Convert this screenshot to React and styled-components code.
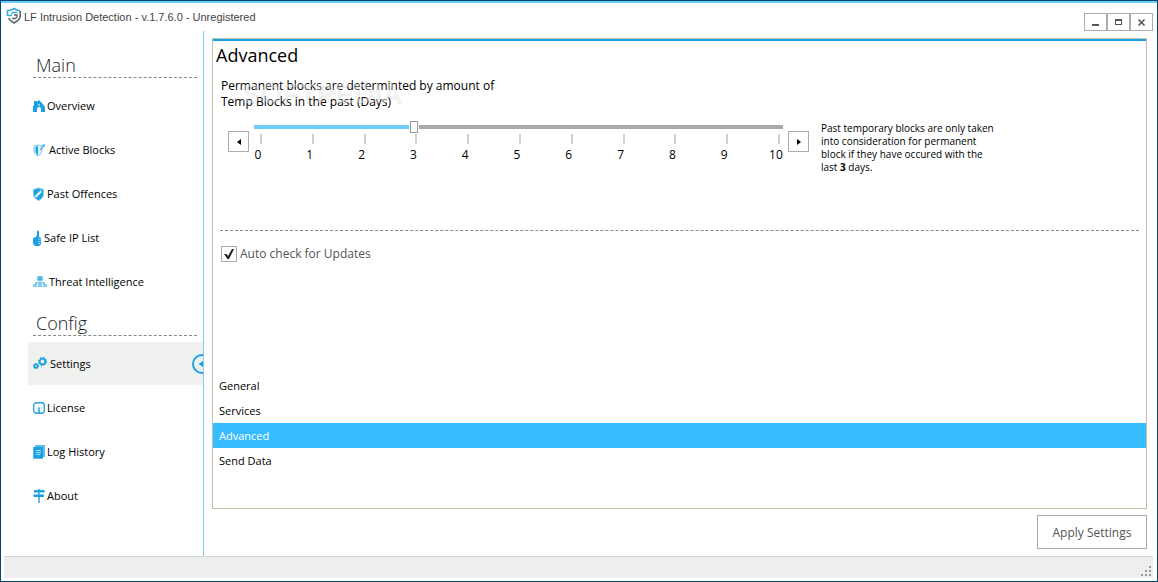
import React, { useState } from 'react'
import styled, { createGlobalStyle, css } from 'styled-components'

const mainLinks = [
    { name: 'Overview', icon: 'home', gap: 2 },
    { name: 'Active Blocks', icon: 'swordShield', gap: 3 },
    { name: 'Past Offences', icon: 'shield', gap: 3 },
    { name: 'Safe IP List', icon: 'thumb', gap: 2 },
    { name: 'Threat Intelligence', icon: 'network', gap: 2 },
]

const configLinks = [
    { name: 'Settings', icon: 'gears', gap: 3 },
    { name: 'License', icon: 'license', gap: 2 },
    { name: 'Log History', icon: 'log', gap: 2 },
    { name: 'About', icon: 'sign', gap: 2 },
]

const tabs = ['General', 'Services', 'Advanced', 'Send Data']

const icons = {
    home: (
        <svg width="12" height="14" viewBox="0 0 12 14" fill="#1ba1e2">
            <path d="M0 7 1 6V2h3v1l2-2 3 3 3 4v5H8v-3a2 2 0 0 0-4 0v3H0z" />
            <path d="M5 5h2v2H5z" fill="#8dd0f1" />
        </svg>
    ),
    swordShield: (
        <svg width="13" height="14" viewBox="0 0 13 14">
            <path d="M1 3 5 2 9 3v4c0 3-2 5-4 6-2-1-4-3-4-6z" fill="#e2f4fc" stroke="#78c9ef" />
            <path d="M2.500 4 5 3v9C3 11 2.500 9 2.500 7z" fill="#1ba1e2" />
            <path d="m7 7 5-5.500M9.500 1.500l2 2" stroke="#4bb6e8" strokeWidth="1.300" />
        </svg>
    ),
    shield: (
        <svg width="11" height="14" viewBox="0 0 11 14">
            <path d="M.5 2.500 5.500 1l5 1.500V7c0 3-2 5-5 6.500C2.500 12 .5 10 .5 7z" fill="#1ba1e2" stroke="#78c9ef" />
            <path d="m2 8.500 6.500-6v3L3 11z" fill="#e6f6fd" />
        </svg>
    ),
    thumb: (
        <svg width="9" height="16" viewBox="0 0 9 16" fill="#1ba1e2">
            <path d="M4 1c1-1 2-.5 2 1v5c2 0 2 1 2 2v4c0 2-1 3-3 3H3c-2 0-3-2-3-4V9c0-1 1-2 3-2l1-2z" />
            <path d="M5 9h3M5 11.500h3M5 13.500h2" stroke="#8dd0f1" />
        </svg>
    ),
    network: (
        <svg width="14" height="13" viewBox="0 0 14 13" fill="#9ad7f4" stroke="#78c9ef">
            <path d="M4.500 1.500h5v4h-5zM.5 9.500h3v2h-3zM5.500 9.500h3v2h-3zM10.500 9.500h3v2h-3zM7 5.500v4M2.500 9V7.500h9V9" />
            <path d="M5 2h4v3H5z" fill="#4bb6e8" stroke="none" />
        </svg>
    ),
    gears: (
        <svg width="14" height="13" viewBox="0 0 14 13" fill="none" stroke="#1ba1e2">
            <circle cx="9.500" cy="4.500" r="2.800" strokeWidth="1.800" />
            <circle cx="9.500" cy="4.500" r="4" strokeWidth="1.200" strokeDasharray="1.600 1.540" />
            <circle cx="3" cy="9" r="1.700" strokeWidth="1.700" />
            <circle cx="3" cy="9" r="2.600" strokeWidth="1" strokeDasharray="1.100 .94" />
            <path d="m8 10 1 1.500" stroke="#9ad7f4" />
        </svg>
    ),
    license: (
        <svg width="12" height="12" viewBox="0 0 12 12" fill="none" stroke="#1ba1e2">
            <rect x=".75" y=".75" width="10.500" height="10.500" rx="2.500" strokeWidth="1.300" />
            <path d="M4 8V6.500C4 5 5 4.500 6 4.500s2 .5 2 2V8" stroke="#bfe6f8" />
            <path d="M6 5.500V11" strokeWidth="1.500" />
        </svg>
    ),
    log: (
        <svg width="12" height="14" viewBox="0 0 12 14">
            <path d="M2 0h10v12h-2v2H0V2h2z" fill="#5dbdea" />
            <path d="M1 2h9v11H1z" fill="#1ba1e2" />
            <path d="M3 5.500h5M3 7.500h5M3 9.500h4" stroke="#a9def6" />
        </svg>
    ),
    sign: (
        <svg width="12" height="14" viewBox="0 0 12 14" fill="#1ba1e2">
            <path d="M5 0h2v14H5z" fill="#5dbdea" />
            <path d="M1 1h10l1 1.250L11 3.500H1zM1 5.500h10V8H1L0 6.750z" />
        </svg>
    ),
}

function Logo() {
    return (
        <svg width="16" height="17" viewBox="0 0 16 17" fill="none" aria-hidden="true">
            <path d="M1.500 9V3.500C4 3.500 6 3 8 1.500c2 1.500 4 2 6 2" stroke="#38a9df" strokeWidth="1.600" />
            <path d="M14.200 4v5c0 3-3 5.500-6.200 7-3-1.500-4.500-3-5.500-5" stroke="#5b6268" strokeWidth="1.600" />
            <path d="M2 8.500h4M11.500 5.500H7L5.500 7" stroke="#38a9df" strokeWidth="1.300" />
            <path d="M8 8h3v2l-1.500 1.500H6" stroke="#5b6268" strokeWidth="1.300" />
        </svg>
    )
}

function NavGroup({ title, links, current, setCurrent }) {
    return (
        <>
            <GroupTitle>{title}</GroupTitle>
            <NavList>
                {links.map((link) => (
                    <li key={link.name}>
                        <NavLink
                            href="#"
                            $gap={link.gap}
                            $selected={link.name === current}
                            onClick={(e) => {
                                e.preventDefault()
                                setCurrent(link.name)
                            }}
                        >
                            {icons[link.icon]}
                            {link.name}
                            {link.name === current && (
                                <Pointer width="11" height="20" viewBox="0 0 11 20">
                                    <circle cx="10" cy="10" r="9" stroke="#1ba1e2" strokeWidth="2" fill="none" />
                                    <path d="m6.500 10 4.500-3v6z" fill="#1ba1e2" />
                                </Pointer>
                            )}
                        </NavLink>
                    </li>
                ))}
            </NavList>
        </>
    )
}

export default function App() {
    const [current, setCurrent] = useState('Settings')
    const [tab, setTab] = useState('Advanced')
    const [days, setDays] = useState(3)
    const [autoCheck, setAutoCheck] = useState(true)

    return (
        <>
            <GlobalStyle />
            <Window>
                <TitleBar>
                    <Logo />
                    <h1>LF Intrusion Detection - v.1.7.6.0 - Unregistered</h1>
                    <WindowButtons>
                        <button aria-label="Minimize">
                            <svg width="9" height="9" viewBox="0 0 9 9"><path d="M1 6h7v2H1z" fill="#555" /></svg>
                        </button>
                        <button aria-label="Maximize">
                            <svg width="9" height="9" viewBox="0 0 9 9"><path d="M1 1h7v6H1zM2 3v3h5V3z" fill="#555" fillRule="evenodd" /></svg>
                        </button>
                        <button aria-label="Close">
                            <svg width="9" height="9" viewBox="0 0 9 9"><path d="m1.500 1.500 6 6m0-6-6 6" stroke="#555" strokeWidth="1.600" /></svg>
                        </button>
                    </WindowButtons>
                </TitleBar>
                <Body>
                    <Sidebar>
                        <NavGroup title="Main" links={mainLinks} current={current} setCurrent={setCurrent} />
                        <NavGroup title="Config" links={configLinks} current={current} setCurrent={setCurrent} />
                    </Sidebar>
                    <Content>
                        <Panel>
                            <h2>Advanced</h2>
                            <BlockSettings>
                                <SliderLabel htmlFor="days">
                                    Permanent blocks are determinted by amount of Temp Blocks in the past (Days)
                                    <Watermark aria-hidden="true">SOFTPEDIA</Watermark>
                                </SliderLabel>
                                <SliderRow>
                                    <StepButton aria-label="Fewer days" onClick={() => setDays(Math.max(0, days - 1))}>
                                        <svg width="4" height="6" viewBox="0 0 4 6"><path d="M4 0v6L0 3z" /></svg>
                                    </StepButton>
                                    <SliderBox>
                                        <Slider
                                            id="days"
                                            type="range"
                                            min="0"
                                            max="10"
                                            value={days}
                                            style={{ '--fill': `${days * 10}%` }}
                                            onChange={(e) => setDays(Number(e.target.value))}
                                        />
                                        <Scale>
                                            {Array.from({ length: 11 }, (_, i) => (
                                                <span key={i}>{i}</span>
                                            ))}
                                        </Scale>
                                    </SliderBox>
                                    <StepButton aria-label="More days" onClick={() => setDays(Math.min(10, days + 1))}>
                                        <svg width="4" height="6" viewBox="0 0 4 6"><path d="M0 0v6l4-3z" /></svg>
                                    </StepButton>
                                    <Note>
                                        Past temporary blocks are only taken into consideration for permanent block if
                                        they have occured with the last <b>{days}</b> days.
                                    </Note>
                                </SliderRow>
                            </BlockSettings>
                            <CheckLabel>
                                <input type="checkbox" checked={autoCheck} onChange={(e) => setAutoCheck(e.target.checked)} />
                                <svg width="10" height="10" viewBox="0 0 10 10"><path d="M0 5h2.500l1.500 2L8 0h2L5 10H3.500z" fill="#222" /></svg>
                                Auto check for Updates
                            </CheckLabel>
                            <Tabs>
                                {tabs.map((name) => (
                                    <Tab key={name} $active={name === tab} onClick={() => setTab(name)}>
                                        {name}
                                    </Tab>
                                ))}
                            </Tabs>
                        </Panel>
                        <ApplyButton>Apply Settings</ApplyButton>
                    </Content>
                </Body>
                <StatusBar>
                    <svg width="10" height="10" viewBox="0 0 10 10" fill="#999">
                        <path d="M8 0h2v2H8zM4 4h2v2H4zM8 4h2v2H8zM0 8h2v2H0zM4 8h2v2H4zM8 8h2v2H8z" />
                    </svg>
                </StatusBar>
            </Window>
        </>
    )
}

const GlobalStyle = createGlobalStyle`
    *{
        box-sizing:border-box;
    }
    body{
        margin:0;
        background:#fff;
        color:#000;
        font:12px "Open Sans", "Noto Sans", sans-serif;
    }
    h1, h2, ul{
        margin:0;
        padding:0;
        font-weight:400;
    }
    button{
        padding:0;
        border:1px solid #acacac;
        background:#fff;
        font:inherit;
    }
`

const Window = styled.div`
    min-height:100vh;
    display:flex;
    flex-direction:column;
    padding:0 3px 3px;
    border:1px solid #004a70;
`

const TitleBar = styled.header`
    display:flex;
    height:30px;
    margin:0 -3px;
    padding:4px 4px 0 5px;
    border-top:2px solid #6fcaf9;
    h1{
        flex:1;
        padding-left:2px;
        color:#444;
        font:11px/20px "Liberation Sans", Arial, sans-serif;
    }
`

const WindowButtons = styled.div`
    display:flex;
    padding-top:6px;
    button{
        display:grid;
        place-items:center;
        width:23px;
        height:18px;
    }
`

const Body = styled.div`
    flex:1;
    display:flex;
`

const Sidebar = styled.nav`
    width:200px;
    padding:15px 0 0 24px;
    border-right:1px solid #83cdf3;
`

const GroupTitle = styled.h2`
    height:32px;
    margin:0 6px 6px 5px;
    padding-left:3px;
    border-bottom:1px dashed #888;
    color:#222;
    font-size:18px;
    font-weight:300;
    line-height:38px;
`

const NavList = styled.ul`
    list-style:none;
    li{
        padding-bottom:1px;
    }
`

const NavLink = styled.a`
    display:flex;
    align-items:center;
    gap:${(props) => props.$gap}px;
    height:43px;
    padding-left:5px;
    color:#000;
    font-size:11px;
    line-height:16px;
    text-decoration:none;
    ${(props) => props.$selected && css`
        background:#f0f2f0;
    `}
`

const Pointer = styled.svg`
    margin-left:auto;
`

const Content = styled.main`
    flex:1;
    display:flex;
    flex-direction:column;
    align-items:flex-end;
    gap:6px;
    padding:7px 7px 7px 8px;
`

const Panel = styled.section`
    flex:1;
    align-self:stretch;
    display:flex;
    flex-direction:column;
    border:1px solid #c1c1ae;
    h2{
        padding-left:3px;
        border-top:2px solid #1ba1e2;
        font-size:18px;
        line-height:28px;
    }
`

const BlockSettings = styled.div`
    height:162px;
    margin:0 7px;
    padding:9px 1px 0;
    border-bottom:1px dashed #888;
`

const SliderLabel = styled.label`
    position:relative;
    display:block;
    width:280px;
    line-height:16px;
`

const Watermark = styled.span`
    position:absolute;
    top:2px;
    left:20px;
    color:rgba(255, 255, 255, 0.4);
    font:bold 28px/28px "Liberation Sans", Arial, sans-serif;
    text-shadow:1px 1px 1px rgba(0, 0, 0, 0.08);
    pointer-events:none;
`

const SliderRow = styled.div`
    display:flex;
    align-items:flex-start;
    gap:5px;
    padding:11px 0 0 7px;
`

const StepButton = styled.button`
    display:grid;
    place-items:center;
    flex:none;
    width:21px;
    height:21px;
    margin-top:10px;
`

const SliderBox = styled.div`
    flex:0 1 529px;
`

const Slider = styled.input`
    appearance:none;
    display:block;
    width:100%;
    height:12px;
    margin:0;
    background:linear-gradient(to right, #6fcdff var(--fill), #a9a9a9 var(--fill)) center / 100% 4px no-repeat;
    &::-webkit-slider-thumb{
        appearance:none;
        width:8px;
        height:12px;
        border:1px solid #999;
        background:#fff;
        box-shadow:1px 0 #fff, -1px 0 #fff;
    }
`

const Scale = styled.div`
    display:flex;
    justify-content:space-between;
    margin-left:-3px;
    span{
        width:14px;
        text-align:center;
        line-height:16px;
    }
    span::before{
        content:"";
        display:block;
        width:2px;
        height:10px;
        margin:1px 0 3px 9px;
        background:#d0d3d3;
    }
`

const Note = styled.p`
    width:176px;
    margin:1px 0 0 7px;
    font-size:10px;
    line-height:13px;
`

const CheckLabel = styled.label`
    display:flex;
    align-items:center;
    align-self:flex-start;
    margin:14px 0 0 8px;
    color:#555;
    line-height:18px;
    input{
        appearance:none;
        width:16px;
        height:16px;
        margin:0;
        border:1px solid #acacac;
    }
    svg{
        margin:0 6px 0 -13px;
        visibility:hidden;
    }
    input:checked + svg{
        visibility:visible;
    }
`

const Tabs = styled.div`
    display:flex;
    flex-direction:column;
    margin-top:auto;
    padding-bottom:35px;
`

const Tab = styled.button`
    height:25px;
    padding:0 6px;
    border:0;
    font-size:11px;
    text-align:left;
    background:${(props) => (props.$active ? '#36bcff' : 'none')};
    color:${(props) => (props.$active ? '#fff' : '#000')};
`

const ApplyButton = styled.button`
    width:110px;
    height:34px;
    color:#555;
`

const StatusBar = styled.footer`
    display:flex;
    justify-content:flex-end;
    align-items:flex-end;
    height:22px;
    margin-right:1px;
    padding:2px;
    border-top:1px solid #d5d5d5;
    background:#eee;
`
